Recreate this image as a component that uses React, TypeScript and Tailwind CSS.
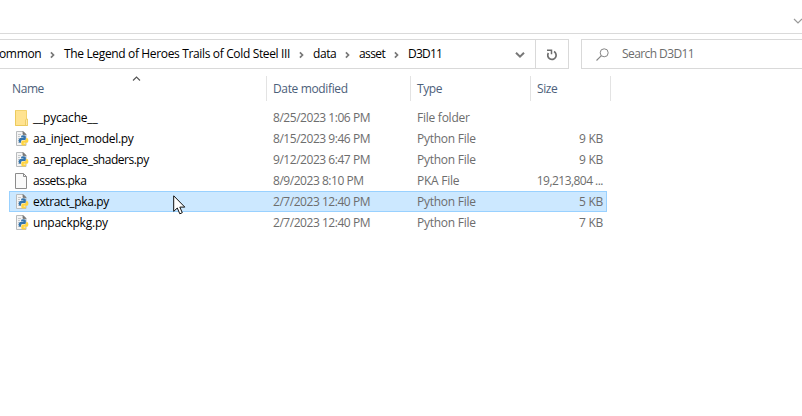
import React from "react";

type Kind = "folder" | "python" | "blank";

interface FileRow {
  name: string;
  date: string;
  type: string;
  size: string;
  kind: Kind;
  nameTracking: string;
  dateTracking: string;
  sizeTracking: string;
  selected?: boolean;
}

const files: FileRow[] = [
  { name: "__pycache__", date: "8/25/2023 1:06 PM", type: "File folder", size: "", kind: "folder", nameTracking: "tracking-[-0.2px]", dateTracking: "tracking-[-0.46px]", sizeTracking: "tracking-[-0.3px]" },
  { name: "aa_inject_model.py", date: "8/15/2023 9:46 PM", type: "Python File", size: "9 KB", kind: "python", nameTracking: "tracking-[-0.3px]", dateTracking: "tracking-[-0.46px]", sizeTracking: "tracking-[-0.3px]" },
  { name: "aa_replace_shaders.py", date: "9/12/2023 6:47 PM", type: "Python File", size: "9 KB", kind: "python", nameTracking: "tracking-[-0.49px]", dateTracking: "tracking-[-0.46px]", sizeTracking: "tracking-[-0.3px]" },
  { name: "assets.pka", date: "8/9/2023 8:10 PM", type: "PKA File", size: "19,213,804 ...", kind: "blank", nameTracking: "tracking-[-0.5px]", dateTracking: "tracking-[-0.46px]", sizeTracking: "tracking-[-0.53px]" },
  { name: "extract_pka.py", date: "2/7/2023 12:40 PM", type: "Python File", size: "5 KB", kind: "python", nameTracking: "tracking-[-0.36px]", dateTracking: "tracking-[-0.46px]", sizeTracking: "tracking-[-0.3px]", selected: true },
  { name: "unpackpkg.py", date: "2/7/2023 12:40 PM", type: "Python File", size: "7 KB", kind: "python", nameTracking: "tracking-[-0.22px]", dateTracking: "tracking-[-0.46px]", sizeTracking: "tracking-[-0.3px]" },
];

function FileIcon({ kind }: { kind: Kind }) {
  if (kind === "folder") {
    return (
      <svg width="16" height="16" viewBox="0 0 16 16" className="shrink-0">
        <path d="M0 0h11.5v9h1v7H0z" fill="#ffe391" />
        <path d="M.5 0v15.5h12" fill="none" stroke="#ecca5c" />
        <path d="M0 .5h11.5V9" fill="none" stroke="#f2d36f" />
        <path d="M10.5 15.5V10l1-1h1v6.5z" fill="#ffe9a6" stroke="#e9c65a" strokeWidth=".8" />
      </svg>
    );
  }
  if (kind === "blank") {
    return (
      <svg width="16" height="16" viewBox="0 0 16 16" className="shrink-0">
        <path d="M.5.5h8l3 3v12H.5z" fill="#fafafa" stroke="#8c8c8c" />
        <path d="M8.5.5v3h3" fill="none" stroke="#8c8c8c" />
      </svg>
    );
  }
  return (
    <svg width="16" height="16" viewBox="0 0 16 16" className="shrink-0">
      <path d="M1.5 .5h6.5l3 3v11h-9.5z" fill="#f4f4f4" stroke="#b9bcbe" />
      <path d="M8 .5v3h3z" fill="#777" stroke="#777" strokeWidth=".8" />
      <path d="M3 3.5h3M3 5.5h2M3 7.5h1M3 9.5h1M3 11.5h2" stroke="#bfc3c6" strokeWidth=".9" />
      <path d="M6.1 5.2Q6.2 4.3 8.2 4.3Q10.8 4.3 10.8 5.6V8Q10.8 9.1 9.6 9.1H7.2Q6 9.3 6 10.6V11.8H4.9Q3.6 11.6 3.6 9.4Q3.6 7.2 5.2 7H8.4V6.5H6.1Z" fill="#3474ac" />
      <path d="M11.2 7H12Q13.4 7.3 13.4 9.4Q13.4 11.6 12 11.8H8.7V12.4H10.9V13.4Q10.8 14.6 8.7 14.6Q6.3 14.6 6.3 13.3V11Q6.4 9.7 7.7 9.6H9.8Q11.2 9.4 11.2 8.1Z" fill="#ffd43f" />
    </svg>
  );
}

function Chevron() {
  return (
    <svg width="6" height="8" viewBox="0 0 6 8" className="mt-px shrink-0">
      <path d="M.9 1.4l2.6 2.6-2.6 2.6" fill="none" stroke="#777" strokeWidth="1.7" />
    </svg>
  );
}

function Crumb({ children, box }: { children: string; box: string }) {
  return <span className={`shrink-0 ${box}`}>{children}</span>;
}

export default function App() {
  return (
    <div className="relative h-[416px] w-[802px] overflow-hidden bg-white font-['Open_Sans','Noto_Sans',sans-serif] text-[12px] leading-[16px] whitespace-nowrap text-black">
      <div className="flex h-[34px] justify-end border-b border-[#dadada] pt-[17px]">
        <svg width="9" height="8" viewBox="0 0 9 8" className="shrink-0">
          <path d="M1 2l4 4 4-4" fill="none" stroke="#999" strokeWidth="1.2" />
        </svg>
      </div>

      <div className="mt-[5px] flex h-[30px]">
        <div className="flex w-[569px] border border-l-0 border-[#d9d9d9]">
          <div className="flex w-[535px] items-center">
            <Crumb box="-ml-px w-[51px] tracking-[-0.35px]">ommon</Crumb>
            <Chevron />
            <Crumb box="ml-[8px] w-[235px] tracking-[-0.35px]">The Legend of Heroes Trails of Cold Steel III</Crumb>
            <Chevron />
            <Crumb box="ml-[8px] w-[32px] tracking-[-0.4px]">data</Crumb>
            <Chevron />
            <Crumb box="ml-[8px] w-[35px] tracking-[-0.6px]">asset</Crumb>
            <Chevron />
            <Crumb box="ml-[8px] w-[107px] tracking-[-0.8px]">D3D11</Crumb>
            <svg width="10" height="8" viewBox="0 0 10 8" className="mt-[2px] shrink-0">
              <path d="M1 1.7l4 4 4-4" fill="none" stroke="#777" strokeWidth="2" />
            </svg>
          </div>
          <div className="flex flex-1 items-center justify-center border-l border-[#d9d9d9]">
            <svg width="12" height="12" viewBox="0 0 12 12" className="mt-px">
              <path d="M8 2.6A4.2 4.2 0 1 1 2.4 4" fill="none" stroke="#6e6e6e" strokeWidth="1.7" />
              <path d="M1 1.2H5.5V5.2" fill="none" stroke="#6e6e6e" strokeWidth="1.5" />
            </svg>
          </div>
        </div>
        <div className="ml-[12px] flex flex-1 items-center border border-r-0 border-[#d9d9d9] pl-[14px] text-[#6d6d6d]">
          <svg width="13" height="13" viewBox="0 0 13 13" className="shrink-0">
            <circle cx="8.2" cy="4.8" r="4" fill="none" stroke="#858585" />
            <path d="M5.4 7.6L.5 12.5" stroke="#858585" strokeWidth="1.1" />
          </svg>
          <span className="ml-[13px] tracking-[-0.58px]">Search D3D11</span>
        </div>
      </div>

      <div className="mt-[7px] flex h-[25px] items-center text-[#4c607a]">
        <div className="relative flex h-full w-[267px] items-center border-r border-[#e3e3e3] pl-[12px]">
          <span className="tracking-[-0.4px]">Name</span>
          <svg width="9" height="6" viewBox="0 0 9 6" className="absolute top-0 left-[132px]">
            <path d="M1 4.5l3.5-3.5L8 4.5" fill="none" stroke="#555" strokeWidth="1.1" />
          </svg>
        </div>
        <div className="flex h-full w-[144px] items-center border-r border-[#e3e3e3] pl-[6px] tracking-[-0.36px]">Date modified</div>
        <div className="flex h-full w-[120px] items-center border-r border-[#e3e3e3] pl-[6px] tracking-[-0.4px]">Type</div>
        <div className="flex h-full w-[80px] items-center border-r border-[#e3e3e3] pl-[6px] tracking-[-0.4px]">Size</div>
      </div>

      <div className="mt-[6px] ml-[9px] w-[598px]">
        {files.map((file) => (
          <div
            key={file.name}
            className={`flex h-[21px] items-center text-[#6d6d6d] ${file.selected ? "bg-[#cce8ff] outline outline-1 -outline-offset-1 outline-[#99d1ff]" : ""}`}
          >
            <div className="flex w-[264px] items-center pl-[6px]">
              <FileIcon kind={file.kind} />
              <span className={`ml-[2px] text-black ${file.nameTracking}`}>{file.name}</span>
            </div>
            <span className={`w-[144px] ${file.dateTracking}`}>{file.date}</span>
            <span className="w-[110px] tracking-[-0.25px]">{file.type}</span>
            <span className={`flex-1 pr-[4px] text-right ${file.sizeTracking}`}>{file.size}</span>
          </div>
        ))}
      </div>

      <svg width="13" height="21" viewBox="0 0 13 21" className="absolute top-[195px] left-[173px]">
        <path d="M.7.8v15.6l3.6-3.4 2.5 5.8 2.5-1.1-2.5-5.6h5z" fill="#fff" stroke="#111" strokeWidth="1" />
      </svg>
    </div>
  );
}
